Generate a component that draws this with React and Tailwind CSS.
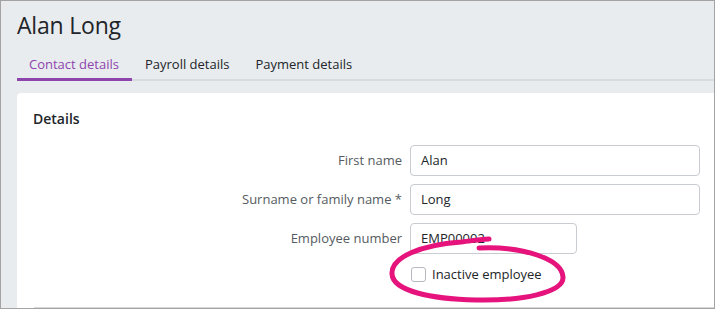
export default function App() {
  return (
    <div className="w-[715px] h-[309px] overflow-hidden border border-[#a3a3a3] bg-[#e9ecef] relative" style={{ fontFamily: '"Open Sans", "Noto Sans", sans-serif' }}>
      <div className="pl-4 pt-[8px]">
        <h1 className="text-[23px] leading-[32px] text-[#212529] tracking-[-0.2px]">Alan Long</h1>
        <div className="mt-[13px] flex border-b-[2px] border-[#d7dce1] text-[13px] leading-[20px]">
          <div className="pl-3 pr-[13px] pb-[4px] border-b-[3px] border-[#8e44ad] -mb-[2px] text-[#8e44ad]">Contact details</div>
          <div className="px-[13px] pb-[4px] text-[#212529]">Payroll details</div>
          <div className="px-[13px] pb-[4px] text-[#212529]">Payment details</div>
        </div>
        <div className="mt-[12px] bg-white rounded-tl-[4px] h-[240px] pl-4 pr-[14px] pt-[14px]">
          <h2 className="text-[14px] font-semibold text-[#212529] leading-[24px]">Details</h2>
          <div className="mt-[14px] flex flex-col gap-[8px] text-[13px]">
            <div className="flex items-center gap-[8px]">
              <label className="w-[369px] text-right text-[#555b61]">First name</label>
              <div className="flex-1 h-[31px] border border-[#c8cbcf] rounded-[4px] px-[10px] flex items-center text-[#212529]">Alan</div>
            </div>
            <div className="flex items-center gap-[8px]">
              <label className="w-[369px] text-right text-[#555b61]">Surname or family name *</label>
              <div className="flex-1 h-[31px] border border-[#c8cbcf] rounded-[4px] px-[10px] flex items-center text-[#212529]">Long</div>
            </div>
            <div className="flex items-center gap-[8px]">
              <label className="w-[369px] text-right text-[#555b61]">Employee number</label>
              <div className="w-[167px] h-[31px] border border-[#c8cbcf] rounded-[4px] px-[10px] flex items-center text-[#212529]">EMP00002</div>
            </div>
            <div className="flex items-center gap-[8px] mt-[2px] leading-[20px]">
              <div className="w-[369px]" />
              <div className="flex items-center gap-[6px] pl-[1px]">
                <span className="w-[15px] h-[15px] border border-[#b5b9be] rounded-[3px] bg-white" />
                <span className="text-[#212529]">Inactive employee</span>
              </div>
            </div>
          </div>
        </div>
      </div>
      <div className="absolute left-[33px] right-0 bottom-0 h-[1px] bg-[#d7d9dc]" />
      <svg className="absolute left-0 top-0 pointer-events-none" width="715" height="309" viewBox="0 0 715 309">
        <path d="M 478 247 C 522 245, 561 258, 562 276 C 563 292, 520 300, 475 299 C 430 298, 392 290, 391 273 C 390 256, 420 244, 460 241 C 470 240, 480 238, 488 238"
          fill="none" stroke="#e5137b" strokeWidth="5" strokeLinecap="round" />
      </svg>
    </div>
  );
}
